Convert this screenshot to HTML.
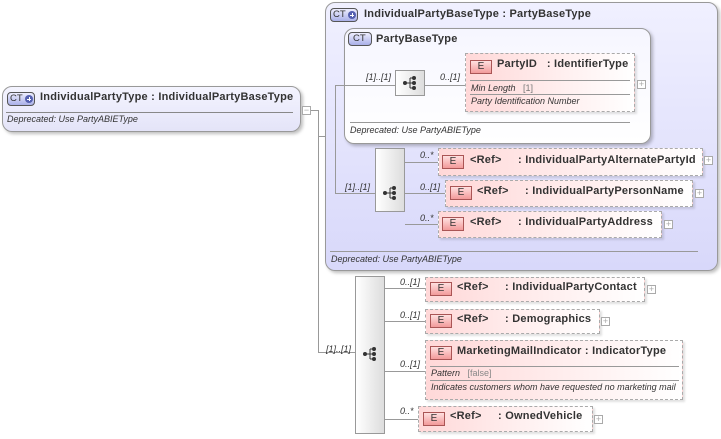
<!DOCTYPE html>
<html><head><meta charset="utf-8"><style>
*{box-sizing:border-box;margin:0;padding:0}
body{width:721px;height:439px;background:#fff;position:relative;overflow:hidden;font-family:"Liberation Sans",Arial,sans-serif;color:#333}
.ct{position:absolute;border:1px solid #999;border-radius:10px;box-shadow:2px 2px 3px rgba(0,0,0,.25)}
.badge{position:absolute;width:28px;height:14px;border:1px solid #555;border-radius:4px;background:linear-gradient(#eef,#aab0e8);font-size:9.5px;line-height:12px;padding-left:2px;color:#333}
.badge i{position:absolute;right:1px;top:2px;width:8px;height:8px;border-radius:50%;background:#5560b0}
.badge i:before{content:"";position:absolute;left:2px;top:3.5px;width:4px;height:1px;background:#fff}
.badge i:after{content:"";position:absolute;left:3.5px;top:2px;width:1px;height:4px;background:#fff}
.t{position:absolute;font-weight:bold;font-size:11px;white-space:nowrap;letter-spacing:.22px}
.it{position:absolute;font-style:italic;font-size:9px;white-space:nowrap}
.hl{position:absolute;height:1px;background:#999}
.vl{position:absolute;width:1px;background:#999}
.el{position:absolute;border:1px dashed #aaa;background:linear-gradient(90deg,#ffd8d8,#fff0f0 60%,#fff);box-shadow:2px 2px 2px rgba(0,0,0,.12)}
.e{position:absolute;width:22px;height:14px;border:1px solid #a55;background:linear-gradient(#ffe0e0,#f29a9a);font-size:10px;line-height:12px;text-align:center;color:#333}
.exp{position:absolute;width:9px;height:9px;border:1px solid #aaa;background:#fff;font-size:9px;line-height:7px;text-align:center;color:#aaa}
.seq{position:absolute;border:1px solid #999;background:linear-gradient(90deg,#fff,#ddd)}
.ic{position:absolute;width:16px;height:16px}
</style></head><body>

<div class="ct" style="left:2px;top:86px;width:299px;height:46px;background:linear-gradient(#f4f4ff,#e4e4f8)"></div>
<div class="badge" style="left:7px;top:92px">CT<i></i></div>
<div class="t" style="left:40px;top:91px">IndividualPartyType : IndividualPartyBaseType</div>
<div class="hl" style="left:6px;top:112px;width:287px;background:#888"></div>
<div class="it" style="left:7px;top:114px">Deprecated: Use PartyABIEType</div>
<div class="exp" style="left:302px;top:106px">−</div>
<div class="hl" style="left:311px;top:110px;width:7px"></div>
<div class="vl" style="left:318px;top:110px;height:243px"></div>
<div class="hl" style="left:318px;top:136px;width:17px"></div>
<div class="hl" style="left:318px;top:352px;width:37px"></div>

<div class="ct" style="left:325px;top:2px;width:393px;height:269px;background:linear-gradient(#f0f0ff,#d8d8fa)"></div>
<div class="badge" style="left:330px;top:8px">CT<i></i></div>
<div class="t" style="left:364px;top:8px">IndividualPartyBaseType : PartyBaseType</div>

<div class="ct" style="left:344px;top:28px;width:307px;height:116px;background:linear-gradient(#f6f6ff,#fff)"></div>
<div class="badge" style="left:348px;top:32px;width:24px;padding-left:4px">CT</div>
<div class="t" style="left:376px;top:33px">PartyBaseType</div>
<div class="hl" style="left:350px;top:122px;width:280px"></div>
<div class="it" style="left:350px;top:125px">Deprecated: Use PartyABIEType</div>

<div class="vl" style="left:335px;top:85px;height:109px"></div>
<div class="hl" style="left:335px;top:85px;width:60px"></div>
<div class="it" style="left:366px;top:72px">[1]..[1]</div>
<div class="seq" style="left:395px;top:70px;width:30px;height:26px"></div>
<svg class="ic" style="left:402px;top:75px" viewBox="0 0 16 16"><circle cx="3" cy="8" r="2" fill="#333"/><path d="M3 8H8M8 3V13M8 3H12M8 8H12M8 13H12" stroke="#333" fill="none"/><circle cx="12" cy="3" r="2" fill="#333"/><circle cx="12" cy="8" r="2" fill="#333"/><circle cx="12" cy="13" r="2" fill="#333"/></svg>
<div class="hl" style="left:425px;top:85px;width:40px"></div>
<div class="it" style="left:440px;top:72px">0..[1]</div>

<div class="el" style="left:465px;top:53px;width:170px;height:59px"></div>
<div class="e" style="left:470px;top:60px">E</div>
<div class="t" style="left:497px;top:58px">PartyID&nbsp;&nbsp;&nbsp;: IdentifierType</div>
<div class="hl" style="left:470px;top:80px;width:160px"></div>
<div class="it" style="left:471px;top:83px">Min Length &nbsp;&nbsp;<span style="font-style:normal;color:#777">[1]</span></div>
<div class="hl" style="left:470px;top:94px;width:160px"></div>
<div class="it" style="left:471px;top:96px">Party Identification Number</div>
<div class="exp" style="left:637px;top:80px">+</div>

<div class="hl" style="left:335px;top:193px;width:40px"></div>
<div class="it" style="left:345px;top:182px">[1]..[1]</div>
<div class="seq" style="left:375px;top:148px;width:30px;height:64px"></div>
<svg class="ic" style="left:382px;top:185px" viewBox="0 0 16 16"><circle cx="3" cy="8" r="2" fill="#333"/><path d="M3 8H8M8 3V13M8 3H12M8 8H12M8 13H12" stroke="#333" fill="none"/><circle cx="12" cy="3" r="2" fill="#333"/><circle cx="12" cy="8" r="2" fill="#333"/><circle cx="12" cy="13" r="2" fill="#333"/></svg>
<div class="hl" style="left:405px;top:162px;width:33px"></div>
<div class="hl" style="left:405px;top:193px;width:40px"></div>
<div class="hl" style="left:405px;top:224px;width:33px"></div>
<div class="it" style="left:420px;top:150px">0..*</div>
<div class="it" style="left:420px;top:182px">0..[1]</div>
<div class="it" style="left:420px;top:213px">0..*</div>

<div class="el" style="left:438px;top:148px;width:265px;height:28px"></div>
<div class="e" style="left:442px;top:155px">E</div>
<div class="t" style="left:470px;top:154px">&lt;Ref&gt;&nbsp;&nbsp;&nbsp;&nbsp;&nbsp;: IndividualPartyAlternatePartyId</div>
<div class="exp" style="left:704px;top:156px">+</div>

<div class="el" style="left:445px;top:180px;width:248px;height:27px"></div>
<div class="e" style="left:450px;top:186px">E</div>
<div class="t" style="left:477px;top:185px">&lt;Ref&gt;&nbsp;&nbsp;&nbsp;&nbsp;&nbsp;: IndividualPartyPersonName</div>
<div class="exp" style="left:695px;top:189px">+</div>

<div class="el" style="left:438px;top:211px;width:224px;height:27px"></div>
<div class="e" style="left:442px;top:217px">E</div>
<div class="t" style="left:470px;top:216px">&lt;Ref&gt;&nbsp;&nbsp;&nbsp;&nbsp;&nbsp;: IndividualPartyAddress</div>
<div class="exp" style="left:664px;top:220px">+</div>

<div class="hl" style="left:330px;top:251px;width:368px"></div>
<div class="it" style="left:331px;top:254px">Deprecated: Use PartyABIEType</div>

<div class="it" style="left:326px;top:344px">[1]..[1]</div>
<div class="seq" style="left:355px;top:276px;width:30px;height:158px"></div>
<svg class="ic" style="left:362px;top:346px" viewBox="0 0 16 16"><circle cx="3" cy="8" r="2" fill="#333"/><path d="M3 8H8M8 3V13M8 3H12M8 8H12M8 13H12" stroke="#333" fill="none"/><circle cx="12" cy="3" r="2" fill="#333"/><circle cx="12" cy="8" r="2" fill="#333"/><circle cx="12" cy="13" r="2" fill="#333"/></svg>
<div class="hl" style="left:385px;top:288px;width:40px"></div>
<div class="hl" style="left:385px;top:321px;width:40px"></div>
<div class="hl" style="left:385px;top:371px;width:40px"></div>
<div class="hl" style="left:385px;top:419px;width:33px"></div>
<div class="it" style="left:400px;top:277px">0..[1]</div>
<div class="it" style="left:400px;top:310px">0..[1]</div>
<div class="it" style="left:400px;top:359px">0..[1]</div>
<div class="it" style="left:400px;top:406px">0..*</div>

<div class="el" style="left:425px;top:277px;width:220px;height:25px"></div>
<div class="e" style="left:430px;top:282px">E</div>
<div class="t" style="left:457px;top:281px">&lt;Ref&gt;&nbsp;&nbsp;&nbsp;&nbsp;&nbsp;: IndividualPartyContact</div>
<div class="exp" style="left:647px;top:285px">+</div>

<div class="el" style="left:425px;top:309px;width:175px;height:25px"></div>
<div class="e" style="left:430px;top:314px">E</div>
<div class="t" style="left:457px;top:313px">&lt;Ref&gt;&nbsp;&nbsp;&nbsp;&nbsp;&nbsp;: Demographics</div>
<div class="exp" style="left:601px;top:317px">+</div>

<div class="el" style="left:425px;top:340px;width:258px;height:60px"></div>
<div class="e" style="left:430px;top:346px">E</div>
<div class="t" style="left:457px;top:345px">MarketingMailIndicator : IndicatorType</div>
<div class="hl" style="left:430px;top:366px;width:249px"></div>
<div class="it" style="left:431px;top:368px">Pattern &nbsp;&nbsp;<span style="font-style:normal;color:#888">[false]</span></div>
<div class="hl" style="left:430px;top:380px;width:249px"></div>
<div class="it" style="left:431px;top:382px">Indicates customers whom have requested no marketing mail</div>

<div class="el" style="left:418px;top:406px;width:175px;height:26px"></div>
<div class="e" style="left:423px;top:412px">E</div>
<div class="t" style="left:450px;top:410px">&lt;Ref&gt;&nbsp;&nbsp;&nbsp;&nbsp;&nbsp;: OwnedVehicle</div>
<div class="exp" style="left:594px;top:415px">+</div>

</body></html>
